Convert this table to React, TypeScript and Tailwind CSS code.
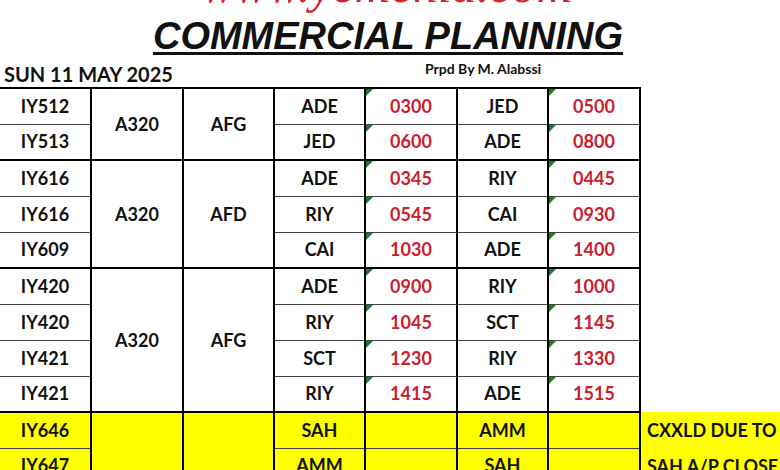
import React from 'react';

type Row = string[];
type Group = { ac: string; reg: string; yellow?: boolean; rows: Row[] };

const groups: Group[] = [
  {
    ac: 'A320',
    reg: 'AFG',
    rows: [
      ['IY512', 'ADE', '0300', 'JED', '0500'],
      ['IY513', 'JED', '0600', 'ADE', '0800'],
    ],
  },
  {
    ac: 'A320',
    reg: 'AFD',
    rows: [
      ['IY616', 'ADE', '0345', 'RIY', '0445'],
      ['IY616', 'RIY', '0545', 'CAI', '0930'],
      ['IY609', 'CAI', '1030', 'ADE', '1400'],
    ],
  },
  {
    ac: 'A320',
    reg: 'AFG',
    rows: [
      ['IY420', 'ADE', '0900', 'RIY', '1000'],
      ['IY420', 'RIY', '1045', 'SCT', '1145'],
      ['IY421', 'SCT', '1230', 'RIY', '1330'],
      ['IY421', 'RIY', '1415', 'ADE', '1515'],
    ],
  },
  {
    ac: '',
    reg: '',
    yellow: true,
    rows: [
      ['IY646', 'SAH', '', 'AMM', '', 'CXXLD DUE TO'],
      ['IY647', 'AMM', '', 'SAH', '', 'SAH A/P CLOSE'],
    ],
  },
];

function Flag() {
  // excel "number stored as text" marker
  return (
    <span className="absolute top-0 left-0 w-0 h-0 border-t-[7px] border-t-[#1f7a2c] border-r-[7px] border-r-transparent" />
  );
}

export default function App() {
  return (
    <div className="w-[780px] h-[470px] overflow-hidden bg-white text-[#111] font-['Lato',sans-serif]">
      <div className="h-[14px] overflow-hidden flex justify-center items-start pr-[6px]">
        <div className="mt-[-40px] leading-[50px] text-[50px] italic font-['Liberation_Serif',serif] text-[#d3262b] whitespace-nowrap">
          www.yemenia.com
        </div>
      </div>

      <div className="mt-[3px] flex justify-center pr-[4px]">
        <h1 className="text-[38px] leading-[38px] font-bold italic font-['Liberation_Sans',sans-serif] underline decoration-[3px] underline-offset-[3px] whitespace-nowrap">
          COMMERCIAL PLANNING
        </h1>
      </div>

      <div className="flex items-end h-[32px] pb-[2px]">
        <div className="pl-[4px] w-[425px] text-[20px] leading-[22px] font-bold">SUN 11 MAY 2025</div>
        <div className="text-[14px] leading-[14px] font-bold self-start mt-[7px]">Prpd By M. Alabssi</div>
      </div>

      <table className="table-fixed border-collapse w-[780px] text-[18px] font-bold">
        <colgroup>
          <col className="w-[91px]" />
          <col className="w-[92px]" />
          <col className="w-[91px]" />
          <col className="w-[91px]" />
          <col className="w-[92px]" />
          <col className="w-[91px]" />
          <col className="w-[92px]" />
          <col className="w-[140px]" />
        </colgroup>
        <tbody>
          {groups.map((g, gi) =>
            g.rows.map((r, ri) => {
              const last = ri === g.rows.length - 1;
              const bg = g.yellow ? 'bg-[#ffff00]' : 'bg-white';
              const hb = last ? 'border-b-2 border-b-black' : 'border-b border-b-[#444]';
              const top = gi === 0 && ri === 0 ? 'border-t-2 border-t-black' : '';
              const cell = `${bg} ${hb} ${top} border-r-2 border-r-black text-center p-0`;
              return (
                <tr key={`${gi}-${ri}`} className="h-[36px]">
                  <td className={cell}>{r[0]}</td>
                  {ri === 0 && (
                    <>
                      <td rowSpan={g.rows.length} className={`${bg} border-b-2 border-b-black ${top} border-r-2 border-r-black text-center p-0`}>
                        {g.ac}
                      </td>
                      <td rowSpan={g.rows.length} className={`${bg} border-b-2 border-b-black ${top} border-r-2 border-r-black text-center p-0`}>
                        {g.reg}
                      </td>
                    </>
                  )}
                  <td className={cell}>{r[1]}</td>
                  <td className={`${cell} relative text-[#c8202f]`}>
                    {!g.yellow && <Flag />}
                    {r[2]}
                  </td>
                  <td className={cell}>{r[3]}</td>
                  <td className={`${cell} relative text-[#c8202f]`}>
                    {!g.yellow && <Flag />}
                    {r[4]}
                  </td>
                  <td className={`${g.yellow ? 'bg-[#ffff00]' : 'bg-white'} text-left pl-[6px] whitespace-nowrap p-0`}>
                    {r[5] || ''}
                  </td>
                </tr>
              );
            })
          )}
        </tbody>
      </table>
    </div>
  );
}
